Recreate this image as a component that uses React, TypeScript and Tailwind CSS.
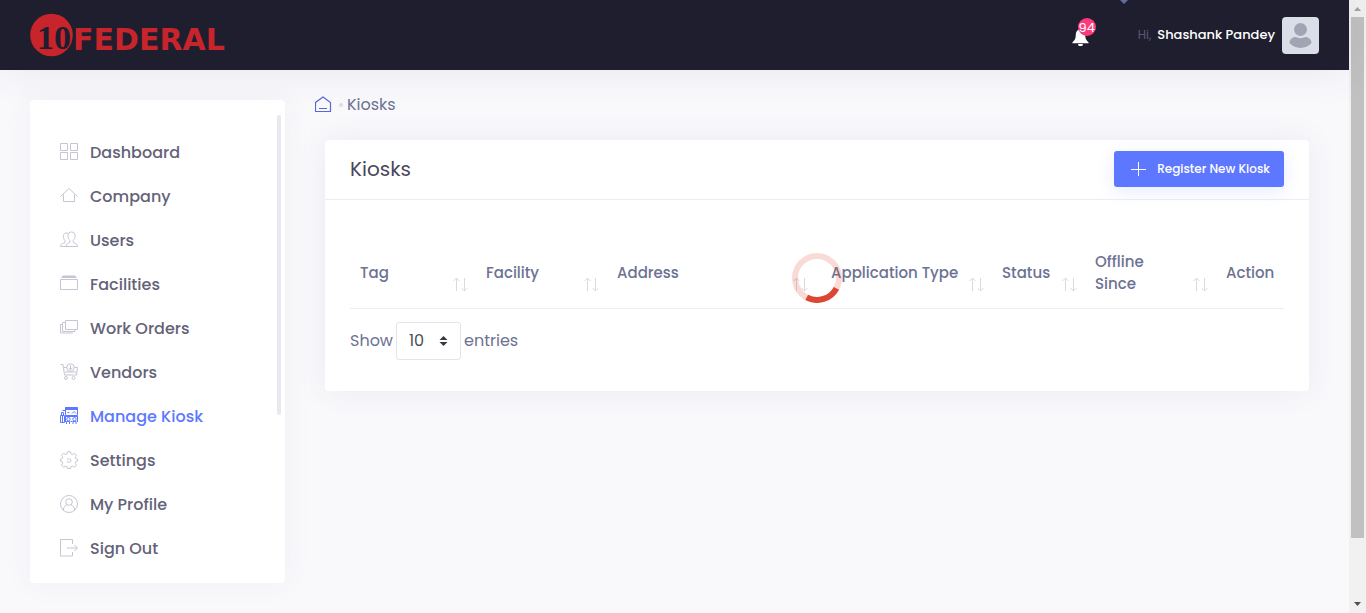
import React from "react";

type IconProps = { children: React.ReactNode; strokeWidth?: number };

function Glyph({ children, strokeWidth = 1 }: IconProps) {
  return (
    <svg
      className="size-[18px] shrink-0"
      viewBox="0 0 18 18"
      fill="none"
      stroke="currentColor"
      strokeWidth={strokeWidth}
      aria-hidden="true"
    >
      {children}
    </svg>
  );
}

const icons = {
  dashboard: <path d="M.5.5h7v7h-7zM10.500.5h7v7h-7zM.5 9.500h7v7h-7zM10.500 9.500h7v7h-7z" />,
  company: <path d="M.5 9.500 9 1.500l8.500 8M3.500 7.500v7h11v-7" />,
  users: (
    <path d="M11.500 1c-2.200 0-3.500 1.500-3.500 3.700 0 2.300.9 3.600 1.800 4.700v2.100c-1.800.8-3.600 1.300-3.800 4h11.500c-.2-2.700-2.400-3.200-4.200-4V9.400c1-1.100 1.700-2.400 1.700-4.700C15 2.500 13.700 1 11.500 1zM8.200 2.300C5 1.300 3.300 3 3.400 5.300c0 2 .6 3.300 1.600 4.300v1.900c-2 .8-4.200 1.300-4.500 4H6" />
  ),
  facilities: (
    <>
      <path d="M.5 4.500h17v10H.5z" />
      <path d="M1 3 3 .5h12L17 3z" fill="currentColor" stroke="none" />
    </>
  ),
  workOrders: (
    <path d="M5.500 1.500h12v9h-12zM5.500 3.500h-3v9h12.500v-2M2.500 5.500h-2v8.500H13" />
  ),
  vendors: (
    <>
      <path d="M.5 1.500h2.500l1.500 10.500h12l1-7.500H14M4 4.500h3" />
      <circle cx="10.500" cy="4.500" r="3.800" />
      <path d="M10.500 2v4.500M8.500 5l2 1.500 2-1.500M5 9h11.500" />
      <circle cx="6" cy="15" r="1.500" />
      <circle cx="13.500" cy="15" r="1.500" />
    </>
  ),
  kiosk: (
    <>
      <path d="M5.500.5h12v8h-12z" />
      <path d="M5 .5h13v2.500H5z" fill="currentColor" stroke="none" />
      <path d="M2.500 3.500h3M7.500 5.500h2M12 6.500l2-2 2 2M.5 8.500h4v7h-4zM1.500 8V5.500h2V8M2.500 9v6M5.500 9.500h12M6.500 17v-2.500h3V17M13 17v-2.500h3V17M5.500 9v6M17.500 9v6M10.500 14.500h2" />
      <circle cx="8.500" cy="12.200" r="1.700" />
      <circle cx="14.500" cy="12.200" r="1.700" />
    </>
  ),
  settings: (
    <>
      <path d="m7.500.700 3 0 .5 2.200 1.500.6 2-1.200 2 2-1.200 2 .6 1.500 1.600.4v2l-1.600.4-.6 1.700 1.200 2-2 2-2-1.200-1.500.6-.5 1.800h-3L7 15.700l-1.500-.6-2 1.200-2-2 1.200-2-.6-1.700L.5 10.200v-2l1.600-.4.6-1.500-1.200-2 2-2 2 1.200L7 2.900z" />
      <path d="M7 8h2.500a1.500 1.500 0 0 1 0 3H7" />
    </>
  ),
  profile: (
    <>
      <circle cx="9" cy="9" r="8.500" />
      <circle cx="9" cy="7" r="3.300" />
      <path d="M3.300 15c.3-3 1.700-4.300 3.700-5.200M14.700 15c-.3-3-1.700-4.300-3.700-5.200" />
    </>
  ),
  signOut: <path d="M12.500 5V.5H.5v16.500h12V13M7 9h10.500M14.500 6l3 3-3 3" />,
};

const navItems: { label: string; icon: keyof typeof icons; active?: boolean }[] = [
  { label: "Dashboard", icon: "dashboard" },
  { label: "Company", icon: "company" },
  { label: "Users", icon: "users" },
  { label: "Facilities", icon: "facilities" },
  { label: "Work Orders", icon: "workOrders" },
  { label: "Vendors", icon: "vendors" },
  { label: "Manage Kiosk", icon: "kiosk", active: true },
  { label: "Settings", icon: "settings" },
  { label: "My Profile", icon: "profile" },
  { label: "Sign Out", icon: "signOut" },
];

function Logo() {
  return (
    <a href="#" aria-label="10 Federal" className="flex items-center">
      <svg width="204" height="44" viewBox="0 0 204 44" aria-hidden="true">
        <circle cx="21.500" cy="22" r="21.300" fill="#c8242b" />
        <text
          x="24"
          y="36"
          fontSize="34"
          fontWeight="700"
          textAnchor="middle"
          className="font-['Liberation_Serif',serif]"
          fill="#1f1e2e"
        >
          10
        </text>
        <text
          x="43"
          y="37"
          fontSize="30"
          fontWeight="700"
          className="font-['DejaVu_Sans',sans-serif]"
          fill="#c8242b"
        >
          FEDERAL
        </text>
      </svg>
    </a>
  );
}

function Header() {
  return (
    <header className="relative z-10 flex h-[70px] items-center justify-between bg-[#1f1e2e] px-[30px] shadow-[0_0_40px_0_rgba(82,63,105,0.1)]">
      <Logo />
      <svg className="absolute top-0 right-[220px]" width="10" height="4" viewBox="0 0 10 4" aria-hidden="true">
        <path d="M1 0h8L5 4z" fill="#626a9f" />
      </svg>
      <div className="flex items-center">
        <button type="button" aria-label="Notifications" className="relative mr-12 h-8 w-[18px]">
          <svg className="mt-1" width="17" height="17" viewBox="0 0 18 18" fill="#fff" aria-hidden="true">
            <path d="M9 0C5.500.8 4 3 4 6c0 4-1 6-3.500 8v1h17v-1C15 12 14 10 14 6c0-3-1.500-5.200-5-6zM6.500 16h5a2.500 2.500 0 0 1-5 0z" />
          </svg>
          <span className="absolute -top-px left-[6px] flex size-[18px] items-center justify-center rounded-full bg-[#fd397a] text-[13px] leading-none text-white">
            94
          </span>
        </button>
        <span className="mr-[6px] text-[12px] text-[#5a5973]">Hi,</span>
        <span className="mr-[7px] text-[13px] font-medium text-white">Shashank Pandey</span>
        <svg className="size-[37px]" viewBox="0 0 37 37" role="img" aria-label="Avatar">
          <rect width="37" height="37" rx="4" fill="#dadee7" />
          <circle cx="18.500" cy="12.500" r="6.500" fill="#a1a5b3" />
          <path d="M7.500 26c0-4 4-6.500 6-6 3 1.500 7 1.500 10 0 2-.5 6 2 6 6-6 6.500-16 6.500-22 0z" fill="#a1a5b3" />
        </svg>
      </div>
    </header>
  );
}

function Sidebar() {
  return (
    <aside className="flex w-[255px] shrink-0 rounded bg-white shadow-[0_0_30px_0_rgba(82,63,105,0.05)]">
      <nav className="flex-1 pt-[30px] pb-[13px] pl-[30px]">
        <ul>
          {navItems.map((item) => (
            <li key={item.label}>
              <a
                href="#"
                aria-current={item.active ? "page" : undefined}
                className={
                  item.active
                    ? "flex h-11 items-center gap-3 text-[16px] font-medium text-[#5d78ff]"
                    : "flex h-11 items-center gap-3 text-[16px] font-medium text-[#646277]"
                }
              >
                <span className={item.active ? "text-[#5d78ff]" : "text-[#c5c5d3]"}>
                  <Glyph>{icons[item.icon]}</Glyph>
                </span>
                <span className="pt-[2px]">{item.label}</span>
              </a>
            </li>
          ))}
        </ul>
      </nav>
      <div className="mt-[15px] mr-1 h-[300px] w-1 rounded bg-[#e8e9f0]" />
    </aside>
  );
}

const columns = [
  { label: "Tag", className: "w-[126px] pl-[10px]", sortable: true },
  { label: "Facility", className: "w-[131px] pl-[10px]", sortable: true },
  { label: "Address", className: "pl-[10px]", sortable: true },
  { label: "Application Type", className: "w-[176px] pl-[15px]", sortable: true },
  { label: "Status", className: "w-[93px] pl-[10px]", sortable: true },
  { label: "Offline Since", className: "w-[131px] pl-[10px]", sortable: true, stacked: true },
  { label: "Action", className: "w-[68px] pl-[10px]", sortable: false },
];

function SortArrows() {
  return (
    <svg
      className="mt-6 mr-2 shrink-0"
      width="15"
      height="14"
      viewBox="0 0 15 14"
      fill="none"
      stroke="#d9d9e5"
      aria-hidden="true"
    >
      <path d="M3.500 13V0M.5 3l3-3 3 3M11.500 0v13M8.500 10l3 3 3-3" />
    </svg>
  );
}

function KioskCard() {
  return (
    <section className="relative mx-[10px] rounded bg-white shadow-[0_0_30px_0_rgba(82,63,105,0.08)]">
      <div className="flex h-[60px] items-start justify-between border-b border-[#ebedf2] px-[25px] pt-[11px]">
        <h1 className="text-[20px] leading-9 text-[#48465b]">Kiosks</h1>
        <button
          type="button"
          className="flex h-9 items-center gap-[11px] rounded-[3px] bg-[#5d78ff] pr-[14px] pl-4 text-[12px] font-medium text-white shadow-[0_4px_16px_0_rgba(93,120,255,0.15)]"
        >
          <svg width="16" height="16" viewBox="0 0 16 16" fill="none" stroke="#fff" aria-hidden="true">
            <path d="M1 8.500h15M8.500 1v14" />
          </svg>
          Register New Kiosk
        </button>
      </div>
      <div className="px-[25px] pt-[38px] pb-[31px]">
        <table className="w-full table-fixed border-collapse">
          <thead>
            <tr className="border-b border-[#ebedf2]">
              {columns.map((column) => (
                <th key={column.label} scope="col" className={`p-0 text-left font-medium ${column.className}`}>
                  <div className="flex h-[70px] items-center justify-between text-[15px] leading-[22px] text-[#6c7293]">
                    <span className={column.stacked ? "w-min" : undefined}>{column.label}</span>
                    {column.sortable && <SortArrows />}
                  </div>
                </th>
              ))}
            </tr>
          </thead>
        </table>
        <label className="mt-[13px] flex items-center gap-[3px] text-[16px] text-[#6c7293]">
          Show
          <span className="relative flex">
            <select
              defaultValue="10"
              className="h-[38px] w-[65px] appearance-none rounded-[3px] border border-[#e2e5ec] bg-white pl-3 text-[16px] text-[#495057]"
            >
              <option>10</option>
              <option>25</option>
              <option>50</option>
              <option>100</option>
            </select>
            <svg
              className="pointer-events-none absolute top-[14px] right-[13px]"
              width="9"
              height="10"
              viewBox="0 0 9 10"
              fill="#343a40"
              aria-hidden="true"
            >
              <path d="M4.500 0 8.500 4h-8zM4.500 10l4-4h-8z" />
            </svg>
          </span>
          entries
        </label>
      </div>
      <svg
        className="absolute top-[113px] left-1/2 size-[50px] -translate-x-1/2"
        viewBox="0 0 50 50"
        fill="none"
        role="img"
        aria-label="Loading"
      >
        <circle cx="25" cy="25" r="22" stroke="#dc4632" strokeOpacity="0.2" strokeWidth="6" />
        <path d="M44.400 35.300A22 22 0 0 1 14.700 44.400" stroke="#dc4632" strokeWidth="6" />
      </svg>
    </section>
  );
}

function PageScrollbar() {
  return (
    <div className="flex w-[17px] shrink-0 flex-col items-center bg-[#f1f1f1]" aria-hidden="true">
      <svg width="17" height="17" viewBox="0 0 17 17" fill="#a3a3a3">
        <path d="M8.500 7 12 11H5z" />
      </svg>
      <div className="w-[13px] grow-[9] bg-[#c1c1c1]" />
      <div className="grow" />
      <svg width="17" height="17" viewBox="0 0 17 17" fill="#505050">
        <path d="M5 6h7l-3.500 4z" />
      </svg>
    </div>
  );
}

export default function App() {
  return (
    <div className="flex min-h-screen bg-[#f9f9fc] font-['Poppins','Inter',sans-serif]">
      <div className="flex min-w-0 flex-1 flex-col">
        <Header />
        <div className="flex flex-1 items-start gap-[30px] p-[30px]">
          <Sidebar />
          <main className="-mt-[10px] min-w-0 flex-1">
            <nav aria-label="Breadcrumb" className="mb-6 flex h-[26px] items-center pt-1">
              <a href="#" aria-label="Home">
                <svg width="17" height="18" viewBox="0 0 17 18" fill="none" stroke="#5867dd" aria-hidden="true">
                  <path d="M.5 15.500V6.500l7.500-5.500 7.500 5.500v9zM4 12.500h8" strokeWidth="1.200" />
                </svg>
              </a>
              <span className="mr-1 ml-[7px] size-1 rounded-full bg-[#dcdde8]" />
              <a href="#" className="text-[16px] text-[#6c7293]">
                Kiosks
              </a>
            </nav>
            <KioskCard />
          </main>
        </div>
      </div>
      <PageScrollbar />
    </div>
  );
}
